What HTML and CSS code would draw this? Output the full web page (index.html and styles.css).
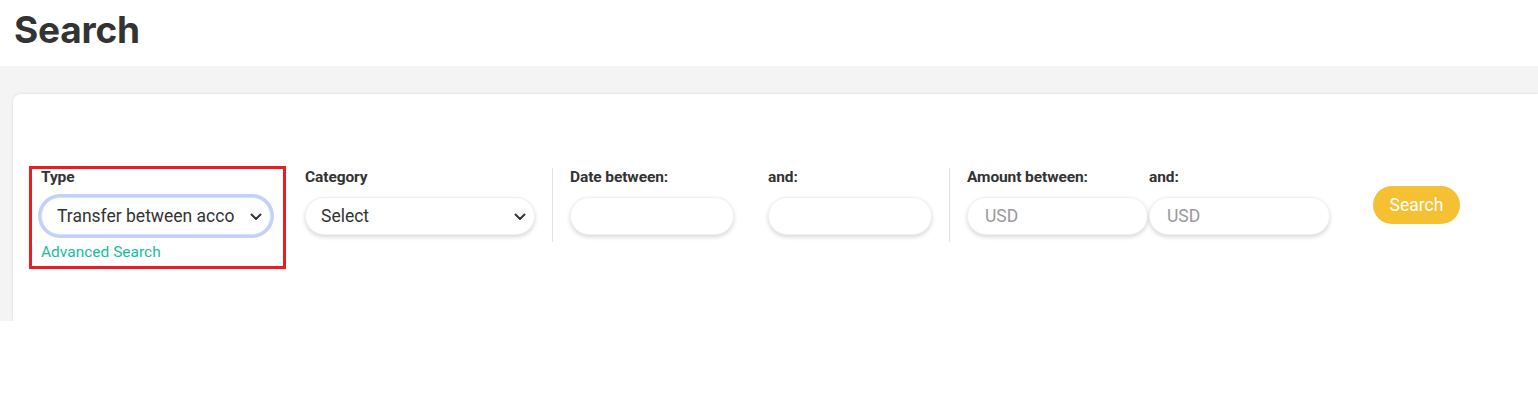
FILE: index.html
```html
<!DOCTYPE html>
<html lang="en">
<head>
  <meta charset="UTF-8" />
  <meta name="viewport" content="width=device-width, initial-scale=1.0"/>
  <title>Search</title>
  <link rel="stylesheet" href="styles.css">
</head>
<body>
  <header class="page-head">
    <h1>Search</h1>
  </header>
  <main class="content">
    <div class="card">
      <form class="filters">
        <div class="field field-type">
          <label for="type">Type</label>
          <div class="select-wrap">
            <select id="type" class="control focused">
              <option>Transfer between accounts</option>
            </select>
            <svg class="chevron" viewBox="0 0 12 8" width="12" height="8"><path d="M1.5 1.5 6 6l4.5-4.5" fill="none" stroke="#333" stroke-width="2" stroke-linecap="round" stroke-linejoin="round"/></svg>
          </div>
          <a href="#" class="adv-link">Advanced Search</a>
        </div>

        <div class="field">
          <label for="category">Category</label>
          <div class="select-wrap">
            <select id="category" class="control">
              <option>Select</option>
            </select>
            <svg class="chevron" viewBox="0 0 12 8" width="12" height="8"><path d="M1.5 1.5 6 6l4.5-4.5" fill="none" stroke="#333" stroke-width="2" stroke-linecap="round" stroke-linejoin="round"/></svg>
          </div>
        </div>

        <div class="divider"></div>

        <div class="field">
          <label for="dateFrom">Date between:</label>
          <input id="dateFrom" class="control date" type="text" />
        </div>
        <div class="field field-and">
          <label for="dateTo">and:</label>
          <input id="dateTo" class="control date" type="text" />
        </div>

        <div class="divider"></div>

        <div class="field">
          <label for="amountFrom">Amount between:</label>
          <input id="amountFrom" class="control amount" type="text" placeholder="USD" />
        </div>
        <div class="field field-tight">
          <label for="amountTo">and:</label>
          <input id="amountTo" class="control amount" type="text" placeholder="USD" />
        </div>

        <button type="button" class="btn-search">Search</button>
      </form>
    </div>
  </main>
</body>
</html>
```

FILE: styles.css
```css
body {
  margin: 0;
  font-family: Roboto, 'Liberation Sans', sans-serif;
  color: #333;
  background-color: #fff;
  height: 396px;
  overflow: hidden;
}

.page-head {
  height: 66px;
  padding-left: 14px;
  box-sizing: border-box;
}

.page-head h1 {
  margin: 0;
  padding-top: 8px;
  font-family: Inter, 'Open Sans', sans-serif;
  font-size: 37px;
  font-weight: 700;
  line-height: 44px;
  letter-spacing: -0.2px;
  color: #333;
}

.content {
  background-color: #f4f4f4;
  height: 255px;
  padding: 28px 0 0 13px;
  box-sizing: border-box;
  overflow: hidden;
}

.card {
  background-color: white;
  height: 100%;
  border-radius: 8px 0 0 0;
  box-shadow: 0 0 3px rgba(0, 0, 0, 0.12);
  padding: 74px 0 0 16px;
  box-sizing: border-box;
}

.filters {
  display: flex;
  align-items: flex-start;
}

.field {
  display: flex;
  flex-direction: column;
  margin-right: 17px;
}

.field label {
  font-size: 15.5px;
  font-weight: 700;
  line-height: 18px;
  color: #333;
  margin-bottom: 11px;
  letter-spacing: -0.1px;
}

.field-type {
  border: 3px solid #ec1c24;
  margin-top: -2px;
  padding: 0 12px 4px 9px;
  margin-right: 19px;
}

.field-type label {
  margin-top: -1px;
}

.field-and {
  margin-left: 17px;
}

.field-tight {
  margin-left: -16px;
}

.select-wrap {
  position: relative;
}

.control {
  height: 38px;
  border: 1px solid #f1f1f1;
  border-radius: 19px;
  background-color: white;
  box-shadow: 0 2px 4px rgba(0, 0, 0, 0.16);
  font-family: Roboto, 'Liberation Sans', sans-serif;
  font-size: 17.5px;
  color: #333;
  outline: none;
  box-sizing: border-box;
}

select.control {
  width: 230px;
  padding: 0 36px 0 15px;
  appearance: none;
  -webkit-appearance: none;
}

.control.focused {
  border-color: #d6dff9;
  box-shadow: 0 0 0 3px #c4d1f6;
}

.chevron {
  position: absolute;
  right: 9px;
  top: 16px;
  pointer-events: none;
}

.control.date {
  width: 164px;
  padding: 0 16px;
}

.control.amount {
  width: 181px;
  padding: 0 17px;
}

.control::placeholder {
  color: #9a9a9a;
}

.adv-link {
  margin-top: 8px;
  font-size: 15.5px;
  line-height: 19px;
  color: #1abc9c;
  text-decoration: none;
}

.divider {
  width: 1px;
  height: 74px;
  background-color: #e2e2e2;
  margin-right: 17px;
}

.btn-search {
  margin: 18px 0 0 26px;
  height: 38px;
  width: 87px;
  border: none;
  border-radius: 19px;
  background-color: #f5c132;
  color: white;
  font-family: Roboto, 'Liberation Sans', sans-serif;
  font-size: 17.5px;
  cursor: pointer;
}
```
